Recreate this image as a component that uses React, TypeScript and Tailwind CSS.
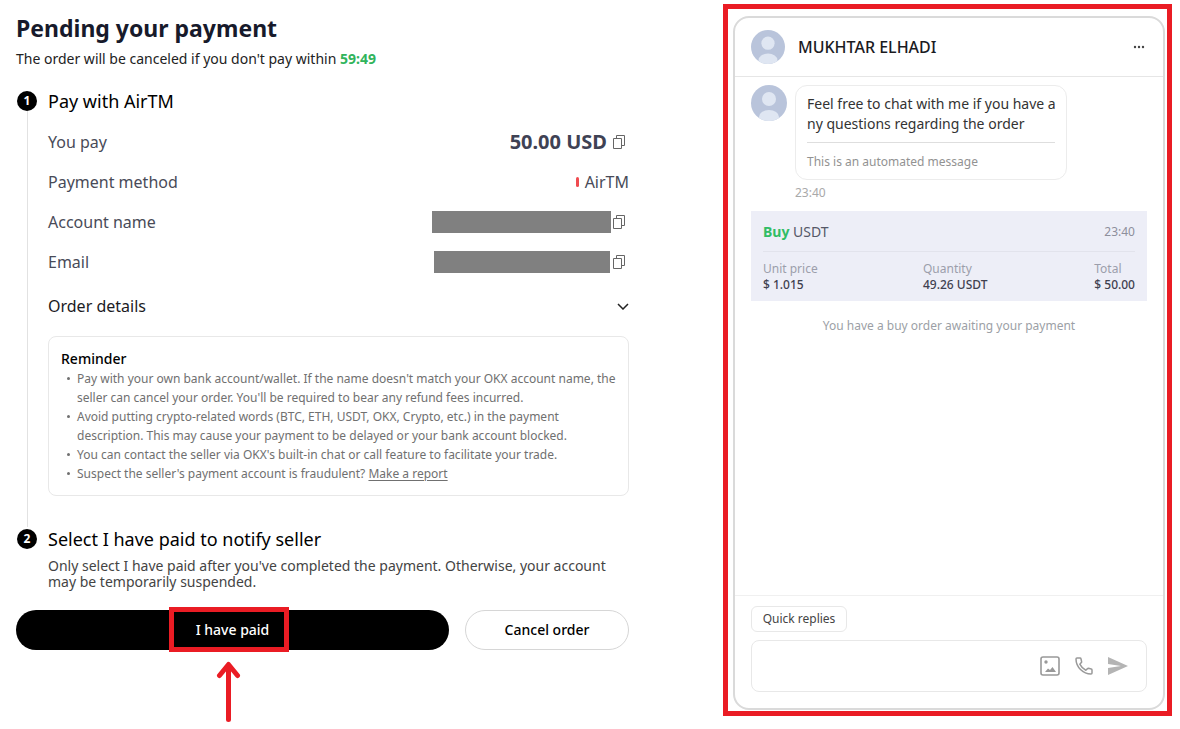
import { ReactNode } from "react";

const reminders: ReactNode[] = [
  "Pay with your own bank account/wallet. If the name doesn't match your OKX account name, the seller can cancel your order. You'll be required to bear any refund fees incurred.",
  "Avoid putting crypto-related words (BTC, ETH, USDT, OKX, Crypto, etc.) in the payment description. This may cause your payment to be delayed or your bank account blocked.",
  "You can contact the seller via OKX's built-in chat or call feature to facilitate your trade.",
  <>
    Suspect the seller's payment account is fraudulent?{" "}
    <a href="#report" className="underline underline-offset-2">
      Make a report
    </a>
  </>,
];

const CopyButton = ({ label }: { label: string }) => (
  <button type="button" aria-label={label} className="mr-1">
    <svg width="12" height="14" viewBox="0 0 12 14" fill="none" stroke="#666" aria-hidden="true">
      <path d="M3.5 3.5v-3h8v10h-3" />
      <path d="M.5 3.5h8v10h-8z" />
    </svg>
  </button>
);

const Avatar = ({ className }: { className: string }) => (
  <svg viewBox="0 0 36 36" className={className} aria-hidden="true">
    <defs>
      <clipPath id="avatar-clip">
        <circle cx="18" cy="18" r="18" />
      </clipPath>
    </defs>
    <circle cx="18" cy="18" r="18" fill="#b9c4db" />
    <g fill="#dfe6f2" clipPath="url(#avatar-clip)">
      <circle cx="18" cy="14" r="7" />
      <ellipse cx="18" cy="32" rx="10" ry="7" />
    </g>
  </svg>
);

const Row = ({ label, children }: { label: string; children: ReactNode }) => (
  <div className="flex h-10 items-center justify-between">
    <dt>{label}</dt>
    <dd className="flex items-center">{children}</dd>
  </div>
);

const StepBadge = ({ number }: { number: number }) => (
  <span className="flex size-5 shrink-0 items-center justify-center rounded-full bg-black text-xs font-bold text-white">
    {number}
  </span>
);

const Payment = () => (
  <main className="pt-2">
    <h1 className="text-[23px] leading-8 font-bold text-[#171a2b]">Pending your payment</h1>
    <p className="mt-[5px] text-sm text-[#222]">
      The order will be canceled if you don't pay within{" "}
      <strong className="text-[#31b45c]">59:49</strong>
    </p>

    <ol className="mt-5">
      <li className="flex gap-[10px]">
        <div className="flex w-[22px] flex-col items-center pt-0.5">
          <StepBadge number={1} />
          <div className="w-px flex-1 bg-[#e2e2e2]" />
        </div>
        <div className="flex-1 pb-[31px]">
          <h2 className="text-lg leading-6 text-black">Pay with AirTM</h2>
          <dl className="mt-[9px] text-base text-[#494b58]">
            <Row label="You pay">
              <span className="mr-1.5 text-xl font-bold text-[#3f4254]">50.00 USD</span>
              <CopyButton label="Copy amount" />
            </Row>
            <Row label="Payment method">
              <span className="mr-1.5 h-[10px] w-[3px] rounded-sm bg-[#f04b50]" />
              AirTM
            </Row>
            <Row label="Account name">
              <span className="mr-0.5 h-[22px] w-[179px] bg-[#808080]" />
              <CopyButton label="Copy account name" />
            </Row>
            <Row label="Email">
              <span className="mr-[3px] h-[22px] w-[176px] bg-[#808080]" />
              <CopyButton label="Copy email" />
            </Row>
          </dl>
          <button
            type="button"
            className="flex h-12 w-full items-center justify-between text-base text-[#1b1b1f]"
          >
            Order details
            <svg width="12" height="7" viewBox="0 0 12 7" fill="none" stroke="#222" strokeWidth="1.5" aria-hidden="true">
              <path d="M1 1l5 5 5-5" />
            </svg>
          </button>
          <section className="mt-1.5 rounded-lg border border-[#e8e8e8] py-3 pr-1 pl-3">
            <h3 className="text-sm font-medium text-black">Reminder</h3>
            <ul className="text-xs leading-[19px] text-[#707070]">
              {reminders.map((text, i) => (
                <li key={i} className="flex gap-[7px] pl-1.5">
                  <span className="mt-2 size-[3px] shrink-0 rounded-full bg-[#707070]" />
                  <span>{text}</span>
                </li>
              ))}
            </ul>
          </section>
        </div>
      </li>
      <li className="flex gap-[10px]">
        <div className="flex w-[22px] flex-col items-center pt-0.5">
          <StepBadge number={2} />
        </div>
        <div className="flex-1">
          <h2 className="text-lg leading-6 text-black">Select I have paid to notify seller</h2>
          <p className="mt-[7px] text-sm leading-4 text-[#444]">
            Only select I have paid after you've completed the payment. Otherwise, your account may be
            temporarily suspended.
          </p>
        </div>
      </li>
    </ol>

    <div className="mt-5 flex gap-4 text-sm font-medium">
      <button type="button" className="relative h-10 flex-1 rounded-full bg-black text-white">
        I have paid
        <span className="absolute -top-[3px] left-[153px] h-[45px] w-[120px] border-5 border-[#ea1c24]" />
        <svg
          className="absolute top-[51px] left-[200px]"
          width="25"
          height="62"
          viewBox="0 0 25 62"
          fill="none"
          stroke="#ea1c24"
          strokeLinecap="round"
          strokeLinejoin="round"
          aria-hidden="true"
        >
          <path d="M12.5 58.5V4M3.5 14.5l9-11 9 11" strokeWidth="5" />
        </svg>
      </button>
      <button type="button" className="h-10 w-[164px] rounded-full border border-[#d6d6d6] text-black">
        Cancel order
      </button>
    </div>
  </main>
);

const Chat = () => (
  <div className="flex border-5 border-[#ea1c24] pt-[7px] pr-0.5 pb-px pl-[5px]">
    <aside className="flex flex-1 flex-col rounded-2xl border-2 border-[#dadada]">
      <header className="flex h-[59px] items-center border-b border-[#e6e6e6] px-4">
        <Avatar className="size-[34px]" />
        <h2 className="ml-[13px] flex-1 text-base font-medium text-[#1b1b1f]">MUKHTAR ELHADI</h2>
        <button type="button" aria-label="More options">
          <svg width="16" height="4" viewBox="0 0 16 4" fill="#444" aria-hidden="true">
            <circle cx="4" cy="2" r="1.2" />
            <circle cx="8" cy="2" r="1.2" />
            <circle cx="12" cy="2" r="1.2" />
          </svg>
        </button>
      </header>

      <div className="flex-1 px-4 pt-2">
        <div className="flex gap-2">
          <Avatar className="size-9" />
          <div>
            <div className="w-[272px] rounded-xl border border-[#ececec] px-[11px] pt-2 pb-2">
              <p className="text-sm whitespace-nowrap text-[#333]">
                Feel free to chat with me if you have a<br />
                ny questions regarding the order
              </p>
              <p className="mt-2 border-t border-[#dedede] pt-2.5 text-xs leading-[18px] text-[#929292]">
                This is an automated message
              </p>
            </div>
            <time className="mt-1 block text-xs leading-[18px] text-[#a9a9a9]">23:40</time>
          </div>
        </div>

        <section className="mt-[9px] bg-[#edeef7] px-3 pt-2.5 pb-2">
          <div className="flex items-center justify-between border-b border-[#e2e3ec] pb-2">
            <h3 className="text-sm leading-[22px] text-[#555868]">
              <strong className="text-[#31bd65]">Buy</strong> USDT
            </h3>
            <time className="text-xs text-[#8d8f9c]">23:40</time>
          </div>
          <dl className="mt-[9px] flex justify-between text-xs leading-4 text-[#3f4150]">
            <div className="w-[160px]">
              <dt className="text-[#9c9eab]">Unit price</dt>
              <dd className="font-medium">$ 1.015</dd>
            </div>
            <div className="flex-1">
              <dt className="text-[#9c9eab]">Quantity</dt>
              <dd className="font-medium">49.26 USDT</dd>
            </div>
            <div>
              <dt className="text-[#9c9eab]">Total</dt>
              <dd className="font-medium">$ 50.00</dd>
            </div>
          </dl>
        </section>

        <p className="mt-[17px] text-center text-xs text-[#9c9fa6]">
          You have a buy order awaiting your payment
        </p>
      </div>

      <footer className="border-t border-[#f0f0f0] px-4 pt-2.5 pb-4">
        <button
          type="button"
          className="block h-[26px] w-24 rounded-md border border-[#e8e8e8] text-xs text-[#444]"
        >
          Quick replies
        </button>
        <div className="mt-2 flex h-[52px] items-center rounded-lg border border-[#e8e8e8] pr-[18px]">
          <input type="text" aria-label="Message" className="h-full min-w-0 flex-1 px-3 text-sm outline-none" />
          <button type="button" aria-label="Send image" className="mr-[15px]">
            <svg width="20" height="20" viewBox="0 0 20 20" fill="none" aria-hidden="true">
              <rect x="1" y="1" width="18" height="18" rx="2" stroke="#999" strokeWidth="1.6" />
              <circle cx="6" cy="6" r="1.7" fill="#999" />
              <path d="M5 16l3-3.5 2 1.5 2.5-3 3.5 5z" fill="#999" />
            </svg>
          </button>
          <button type="button" aria-label="Call seller" className="mr-[15px]">
            <svg width="18" height="18" viewBox="0 0 18 18" fill="none" stroke="#999" strokeWidth="1.5" strokeLinejoin="round" aria-hidden="true">
              <path d="M1 2c0-.6.4-1 1-1h3c.5 0 .9.3 1 .8l.6 2.8c.1.4 0 .7-.3 1L4.800 7.200c1.300 2.600 3.300 4.700 6 6l1.700-1.600c.3-.3.6-.3 1-.3l2.700.6c.5.1.8.5.8 1V16c0 .6-.4 1-1 1C8 17 1 10 1 2z" />
            </svg>
          </button>
          <button type="button" aria-label="Send message">
            <svg width="20" height="18" viewBox="0 0 20 18" fill="#b4b4b4" aria-hidden="true">
              <path d="M0 0l20 9-20 9v-7l13-2L0 7z" />
            </svg>
          </button>
        </div>
      </footer>
    </aside>
  </div>
);

const App = () => (
  <div className="grid min-h-screen grid-cols-[minmax(0,1fr)_449px] gap-[94px] bg-white pt-1 pr-2 pb-[13px] pl-4 font-['Noto_Sans',sans-serif]">
    <Payment />
    <Chat />
  </div>
);

export default App;
